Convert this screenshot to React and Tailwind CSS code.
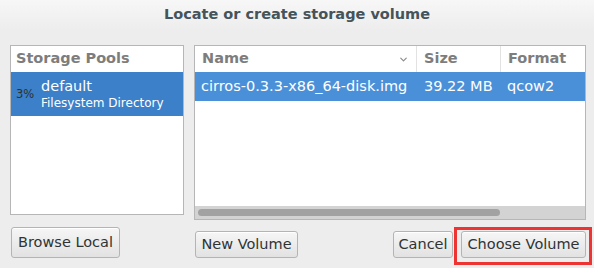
import React from "react";
import { ChevronDown } from "lucide-react";

function Button({ children, className = "" }) {
  return (
    <button
      className={`flex items-center justify-center rounded-[3px] border border-[#b4b4b4] bg-gradient-to-b from-[#f6f6f6] to-[#e2e2e2] text-[14.5px] text-[#2e3436] shadow-[inset_0_1px_0_#ffffff] ${className}`}
    >
      {children}
    </button>
  );
}

function App() {
  return (
    <div
      className="relative w-[594px] h-[268px] overflow-hidden bg-[#ededed]"
      style={{ fontFamily: "'DejaVu Sans', sans-serif" }}
    >
      <div className="h-[30px] flex items-center justify-center bg-gradient-to-b from-[#f7f7f7] to-[#ededed]">
        <span className="text-[14.5px] font-bold text-[#45535a]">
          Locate or create storage volume
        </span>
      </div>

      <div className="flex pt-[15px] pl-[10px] gap-[10px]">
        {/* storage pools */}
        <div className="w-[174px] flex flex-col">
          <div className="h-[170px] border border-[#b6b6b6] bg-white">
            <div className="h-[26px] flex items-center pl-[5px] text-[14.5px] font-bold text-[#7d7d7d]">
              Storage Pools
            </div>
            <div className="h-[44px] flex items-center bg-[#3c80c9]">
              <span className="w-[30px] pl-[5px] pt-[2px] text-[11.5px] text-[#2a3033]">3%</span>
              <div className="flex flex-col text-white leading-tight">
                <span className="text-[14.5px]">default</span>
                <span className="text-[12px]">Filesystem Directory</span>
              </div>
            </div>
          </div>
          <Button className="mt-[12px] ml-[1px] w-[109px] h-[31px]">Browse Local</Button>
        </div>

        {/* volumes */}
        <div className="w-[392px] flex flex-col">
          <div className="h-[175px] flex flex-col border border-[#b6b6b6] bg-white">
            <div className="h-[26px] flex text-[14.5px] font-bold text-[#7d7d7d]">
              <div className="w-[222px] flex items-center justify-between pl-[7px] pr-[7px] border-r border-[#e2e2e2]">
                <span>Name</span>
                <ChevronDown size={11} strokeWidth={2.5} className="text-[#8a8a8a]" />
              </div>
              <div className="w-[84px] flex items-center pl-[7px] border-r border-[#e2e2e2]">Size</div>
              <div className="flex-1 flex items-center pl-[7px]">Format</div>
            </div>
            <div className="h-[29px] flex items-center bg-[#4a90d9] text-white text-[14.5px]">
              <span className="w-[222px] pl-[6px]">cirros-0.3.3-x86_64-disk.img</span>
              <span className="w-[84px] pl-[7px]">39.22 MB</span>
              <span className="pl-[6px]">qcow2</span>
            </div>
            <div className="flex-1" />
            <div className="h-[13px] flex items-center bg-[#d3d3d3] pl-[3px]">
              <div className="w-[302px] h-[7px] rounded-full bg-[#a2a2a2]" />
            </div>
          </div>
          <div className="mt-[11px] flex">
            <Button className="ml-[1px] w-[103px] h-[27px]">New Volume</Button>
            <div className="flex-1" />
            <Button className="w-[60px] h-[27px]">Cancel</Button>
            <Button className="ml-[8px] w-[125px] h-[27px]">Choose Volume</Button>
          </div>
        </div>
      </div>

      <div className="absolute left-[454px] top-[227px] w-[138px] h-[38px] border-[3px] border-[#ee3333]" />
    </div>
  );
}

export default App;
